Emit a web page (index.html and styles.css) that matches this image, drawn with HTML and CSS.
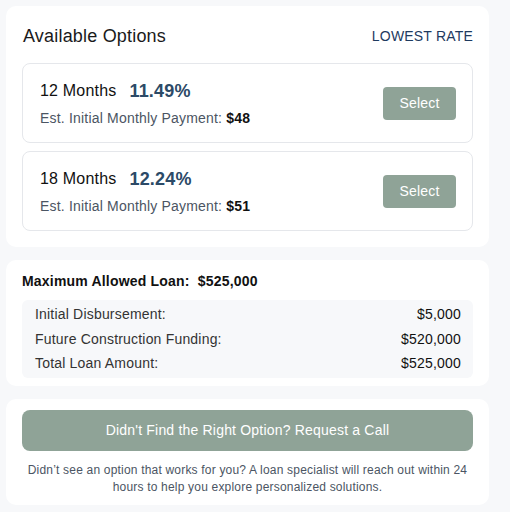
FILE: index.html
```html
<!DOCTYPE html>
<html>
<head>
<meta charset="utf-8">
<link rel="stylesheet" href="styles.css">
</head>
<body>
<div class="wrap">
  <section class="card options">
    <div class="head">
      <h2 class="title">Available Options</h2>
      <span class="sort">LOWEST RATE</span>
    </div>
    <div class="opt">
      <div class="opt-info">
        <div class="opt-top"><span class="term">12 Months</span><span class="rate">11.49%</span></div>
        <div class="opt-pay">Est. Initial Monthly Payment: <b>$48</b></div>
      </div>
      <button class="select">Select</button>
    </div>
    <div class="opt">
      <div class="opt-info">
        <div class="opt-top"><span class="term">18 Months</span><span class="rate">12.24%</span></div>
        <div class="opt-pay">Est. Initial Monthly Payment: <b>$51</b></div>
      </div>
      <button class="select">Select</button>
    </div>
  </section>
  <section class="card loan">
    <div class="max">Maximum Allowed Loan:&nbsp; $525,000</div>
    <div class="breakdown">
      <div class="row"><span>Initial Disbursement:</span><span>$5,000</span></div>
      <div class="row"><span>Future Construction Funding:</span><span>$520,000</span></div>
      <div class="row"><span>Total Loan Amount:</span><span>$525,000</span></div>
    </div>
  </section>
  <section class="card call">
    <button class="request">Didn't Find the Right Option? Request a Call</button>
    <p class="note">Didn’t see an option that works for you? A loan specialist will reach out within 24 hours to help you explore personalized solutions.</p>
  </section>
</div>
</body>
</html>
```
FILE: styles.css
```css
* { box-sizing: border-box; }
html, body { margin: 0; padding: 0; }
body {
  background: #f7f8fa;
  font-family: "Liberation Sans", Arial, sans-serif;
  color: #111;
  letter-spacing: 0.012em;
}
.wrap {
  width: 483px;
  margin: 6px 0 0 6px;
  display: flex;
  flex-direction: column;
  gap: 13px;
}
.card {
  background: #fff;
  border-radius: 10px;
}
.options { padding: 16px 16px 16px; }
.head {
  display: flex;
  justify-content: space-between;
  align-items: center;
  height: 28px;
  margin-bottom: 13px;
}
.title {
  margin: 0;
  font-size: 18px;
  font-weight: normal;
  color: #1a1a1a;
  padding-left: 1px;
}
.sort {
  font-size: 14px;
  color: #1e3a5f;
}
.opt {
  border: 1px solid #e5e7eb;
  border-radius: 8px;
  padding: 14px 16px 14px 17px;
  display: flex;
  justify-content: space-between;
  align-items: center;
}
.opt + .opt { margin-top: 8px; }
.opt-top {
  height: 26px;
  display: flex;
  align-items: center;
}
.term { font-size: 16px; color: #111; }
.rate {
  font-size: 18px;
  font-weight: bold;
  color: #2c4a67;
  margin-left: 13px;
}
.opt-pay {
  margin-top: 4px;
  font-size: 14px;
  line-height: 20px;
  color: #4b5563;
}
.opt-pay b { color: #111; }
.select {
  font-family: inherit;
  font-size: 14px;
  line-height: 17px;
  letter-spacing: inherit;
  color: #fff;
  background: #8fa397;
  border: 0;
  border-radius: 4px;
  padding: 8px 0;
  width: 73px;
  margin-top: 1px;
}
.loan { padding: 12px 16px 8px; }
.max {
  font-size: 14px;
  font-weight: bold;
  line-height: 18px;
  color: #111;
  margin-bottom: 10px;
}
.breakdown {
  background: #f7f8fa;
  border-radius: 6px;
  padding: 2px 12px 2px 13px;
}
.row {
  display: flex;
  justify-content: space-between;
  font-size: 14px;
  line-height: 24.5px;
  color: #333;
}
.row span:last-child { color: #111; }
.call { padding: 11px 16px 8px; }
.request {
  display: block;
  width: 100%;
  height: 41px;
  border: 0;
  border-radius: 8px;
  background: #8fa397;
  color: #fff;
  font-family: inherit;
  letter-spacing: inherit;
  font-size: 14px;
}
.note {
  margin: 11px 0 0;
  font-size: 12px;
  line-height: 17.5px;
  color: #4b5563;
  text-align: center;
}
```
